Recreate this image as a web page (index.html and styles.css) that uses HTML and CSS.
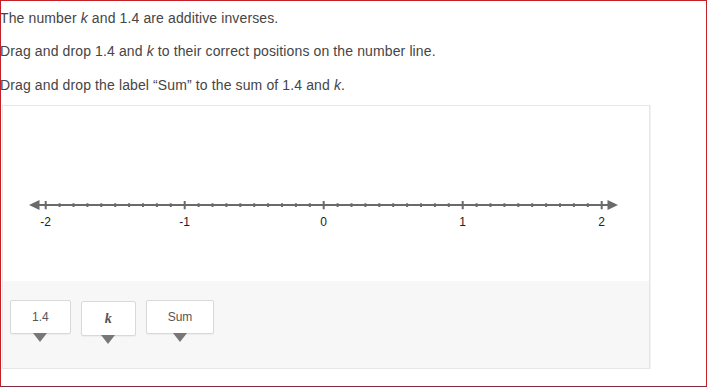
FILE: index.html
```html
<!DOCTYPE html>
<html>
<head>
<meta charset="utf-8">
<link rel="stylesheet" href="styles.css">
</head>
<body>
<div class="frame">
  <div class="content">
    <p class="line">The number <i>k</i> and 1.4 are additive inverses.</p>
    <p class="line">Drag and drop 1.4 and <i>k</i> to their correct positions on the number line.</p>
    <p class="line">Drag and drop the label “Sum” to the sum of 1.4 and <i>k</i>.</p>
    <div class="panel">
      <div class="stage">
        <svg class="numline" width="646" height="175" viewBox="0 0 646 175">
          <g stroke="#6a6a6a" fill="none">
            <line x1="30" y1="99" x2="610" y2="99" stroke-width="2"/>
            <path stroke-width="2" d="M56.6 97.3V101M70.5 97.3V101M84.4 97.3V101M98.3 97.3V101M112.2 97.3V101M126.1 97.3V101M140 97.3V101M153.9 97.3V101M167.8 97.3V101M195.6 97.3V101M209.5 97.3V101M223.4 97.3V101M237.3 97.3V101M251.2 97.3V101M265.1 97.3V101M279 97.3V101M292.9 97.3V101M306.8 97.3V101M334.6 97.3V101M348.5 97.3V101M362.4 97.3V101M376.3 97.3V101M390.2 97.3V101M404.1 97.3V101M418 97.3V101M431.9 97.3V101M445.8 97.3V101M473.6 97.3V101M487.5 97.3V101M501.4 97.3V101M515.3 97.3V101M529.2 97.3V101M543.1 97.3V101M557 97.3V101M570.9 97.3V101M584.8 97.3V101"/>
            <path stroke-width="2" d="M42.7 95V103.3M181.7 95V103.3M320.7 95V103.3M459.7 95V103.3M598.7 95V103.3"/>
          </g>
          <path fill="#6a6a6a" d="M26 99L36.5 94V104Z"/>
          <path fill="#6a6a6a" d="M615 99L604.5 94V104Z"/>
          <g class="labels" text-anchor="middle">
            <text x="42.7" y="120">-2</text>
            <text x="181.7" y="120">-1</text>
            <text x="320.7" y="120">0</text>
            <text x="459.7" y="120">1</text>
            <text x="598.7" y="120">2</text>
          </g>
        </svg>
      </div>
      <div class="tray">
        <div class="chip">1.4</div>
        <div class="chip chip-k"><i>k</i></div>
        <div class="chip">Sum</div>
      </div>
    </div>
  </div>
</div>
</body>
</html>
```

FILE: styles.css
```css
html, body {
  margin: 0;
  padding: 0;
  background: #fff;
}

.frame {
  box-sizing: border-box;
  width: 707px;
  height: 387px;
  border: 1px solid #c32127;
  border-bottom-color: #7d2c3b;
  overflow: hidden;
  font-family: "Liberation Sans", Arial, sans-serif;
}

.content {
  padding-top: 7px;
}

.line {
  margin: 0 0 13.3px -1px;
  font-size: 14px;
  line-height: 20px;
  letter-spacing: 0.12px;
  color: #454545;
}

.line i {
  font-style: italic;
}

.panel {
  box-sizing: border-box;
  width: 648px;
  margin: -3px 0 0 1px;
  border: 1px solid #e6e6e6;
  box-shadow: 1px 0 0 #f3f3f3;
}

.stage {
  height: 175px;
  background: #fff;
}

.numline {
  display: block;
}

.labels {
  font-family: "Liberation Sans", Arial, sans-serif;
  font-size: 12px;
  fill: #222;
}

.tray {
  height: 87px;
  background: #f7f7f7;
  display: flex;
  align-items: flex-start;
  gap: 10px;
  padding: 19px 0 0 7px;
  box-sizing: border-box;
}

.chip {
  position: relative;
  box-sizing: border-box;
  height: 34px;
  padding: 0 21px;
  background: #fff;
  border: 1px solid #d9d9d9;
  border-radius: 2px;
  box-shadow: 0 1px 1px rgba(0,0,0,0.04);
  font-size: 12px;
  line-height: 32px;
  color: #555;
  text-align: center;
}

.chip::after {
  content: "";
  position: absolute;
  top: 100%;
  left: 50%;
  margin-left: -7px;
  border-left: 7px solid transparent;
  border-right: 7px solid transparent;
  border-top: 9px solid #777;
}

.chip-k {
  margin-top: 1px;
  height: 35px;
  padding: 0 23px;
  font-family: "Liberation Serif", "Times New Roman", serif;
  font-size: 14px;
  font-weight: bold;
  line-height: 33px;
}
```
